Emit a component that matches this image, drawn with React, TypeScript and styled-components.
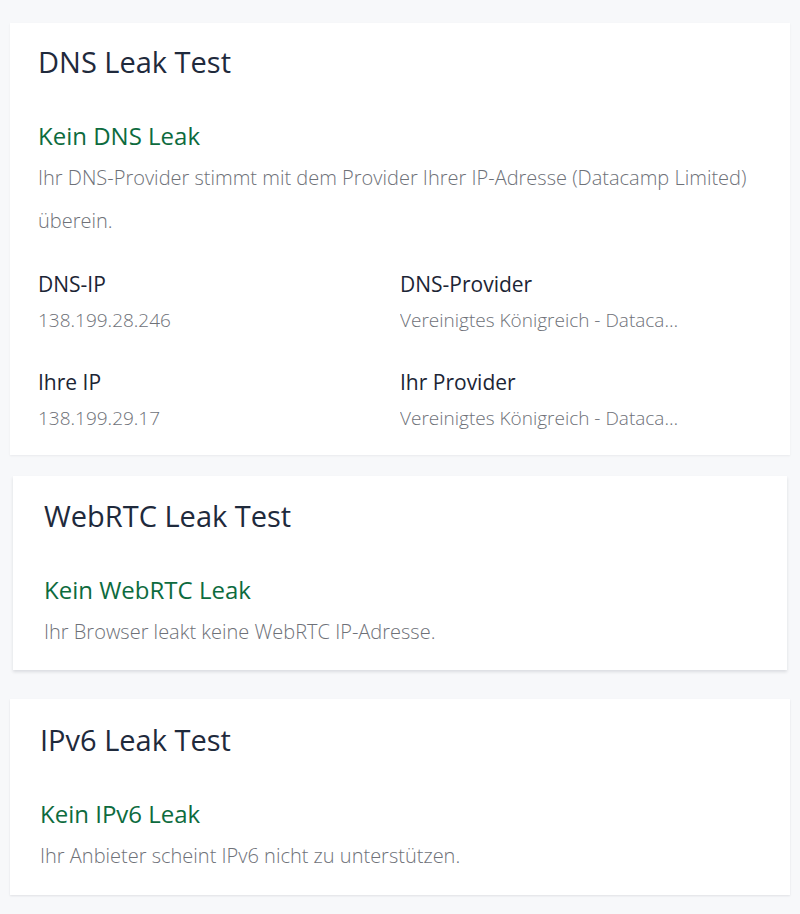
import React from "react";
import styled, { createGlobalStyle } from "styled-components";

const GlobalStyle = createGlobalStyle`
  html, body {
    margin: 0;
    padding: 0;
    background: #f7f8fa;
  }
  body {
    font-family: "Open Sans", "Noto Sans", sans-serif;
    -webkit-font-smoothing: antialiased;
  }
`;

const Page = styled.div`
  display: flex;
  flex-direction: column;
  padding: 23px 10px 18px;
`;

type CardProps = {
  $inset: number;
  $padX: number;
  $padTop: number;
  $padBottom: number;
  $gapTop: number;
  $shadow?: string;
};

const Card = styled.section<CardProps>`
  background: #ffffff;
  margin: ${(p) => p.$gapTop}px ${(p) => p.$inset}px 0;
  padding: ${(p) => p.$padTop}px ${(p) => p.$padX}px ${(p) => p.$padBottom}px;
  box-shadow: ${(p) => p.$shadow ?? "0 1px 2px rgba(15, 23, 42, 0.06)"};
`;

const Title = styled.h2`
  margin: 0;
  font-size: 29px;
  line-height: 44px;
  font-weight: 500;
  color: #1f2a3c;
`;

const Status = styled.h3`
  margin: 37px 0 0;
  font-size: 24px;
  line-height: 30px;
  font-weight: 500;
  color: #0d6b3e;
`;

const Text = styled.p`
  margin: 5px 0 0;
  font-size: 20px;
  line-height: 43px;
  font-weight: 300;
  color: #6e7178;
`;

const InfoGrid = styled.div`
  display: grid;
  grid-template-columns: 1fr 1fr;
  row-gap: 35px;
  margin-top: 27px;
`;

const Field = styled.div`
  display: flex;
  flex-direction: column;
  gap: 9px;
  min-width: 0;
`;

const Label = styled.span`
  font-size: 21px;
  line-height: 30px;
  font-weight: 500;
  color: #1c2535;
`;

const Value = styled.span`
  max-width: 294px;
  font-size: 19px;
  line-height: 24px;
  font-weight: 300;
  color: #6e7178;
  white-space: nowrap;
  overflow: hidden;
  text-overflow: ellipsis;
`;

type Info = { label: string; value: string };

const fields: Info[] = [
  { label: "DNS-IP", value: "138.199.28.246" },
  { label: "DNS-Provider", value: "Vereinigtes Königreich - Datacamp Limited" },
  { label: "Ihre IP", value: "138.199.29.17" },
  { label: "Ihr Provider", value: "Vereinigtes Königreich - Datacamp Limited" },
];

const App: React.FC = () => {
  return (
    <>
      <GlobalStyle />
      <Page>
        <Card $inset={0} $padX={28} $padTop={17} $padBottom={25} $gapTop={0}>
          <Title>DNS Leak Test</Title>
          <Status>Kein DNS Leak</Status>
          <Text>
            Ihr DNS-Provider stimmt mit dem Provider Ihrer IP-Adresse (Datacamp Limited) überein.
          </Text>
          <InfoGrid>
            {fields.map((f) => (
              <Field key={f.label}>
                <Label>{f.label}</Label>
                <Value title={f.value}>{f.value}</Value>
              </Field>
            ))}
          </InfoGrid>
        </Card>
        <Card
          $inset={3}
          $padX={31}
          $padTop={18}
          $padBottom={17}
          $gapTop={21}
          $shadow="0 2px 3px rgba(15, 23, 42, 0.12)"
        >
          <Title>WebRTC Leak Test</Title>
          <Status>Kein WebRTC Leak</Status>
          <Text>Ihr Browser leakt keine WebRTC IP-Adresse.</Text>
        </Card>
        <Card
          $inset={0}
          $padX={30}
          $padTop={19}
          $padBottom={18}
          $gapTop={29}
          $shadow="0 1px 2px rgba(15, 23, 42, 0.1)"
        >
          <Title>IPv6 Leak Test</Title>
          <Status>Kein IPv6 Leak</Status>
          <Text>Ihr Anbieter scheint IPv6 nicht zu unterstützen.</Text>
        </Card>
      </Page>
    </>
  );
};

export default App;
